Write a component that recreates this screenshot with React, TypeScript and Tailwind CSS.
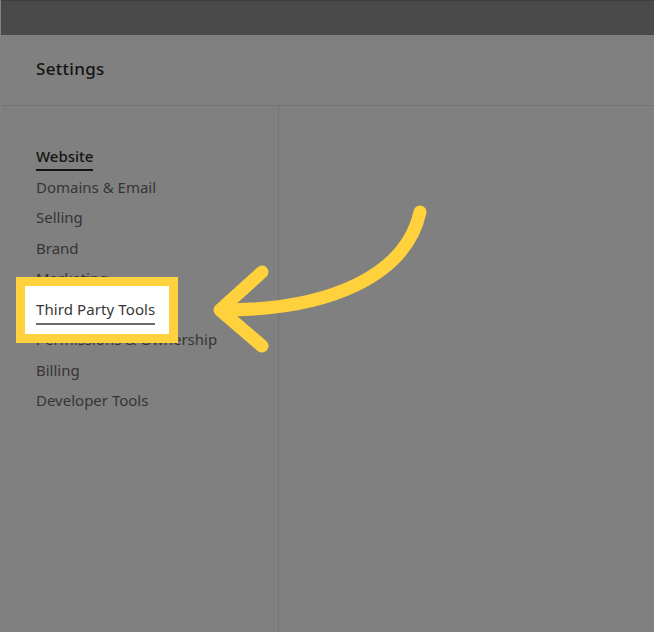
const navItems = [
  "Website",
  "Domains & Email",
  "Selling",
  "Brand",
  "Marketing",
  "Third Party Tools",
  "Permissions & Ownership",
  "Billing",
  "Developer Tools",
];

const App = () => {
  return (
    <div className="relative w-[654px] h-[632px] overflow-hidden bg-[#808080] font-['Noto_Sans',sans-serif] border-l border-[#8c7f80]">
      <div className="h-[35px] bg-[#4a4a4a] border-t border-[#3e3e3e]"></div>
      <div className="h-[71px] flex items-center px-[35px] border-b border-[#747474]">
        <div className="text-[17px] font-medium text-[#141414] tracking-[0.3px] -mt-[2px]">Settings</div>
      </div>
      <div className="flex h-[526px]">
        <div className="w-[278px] border-r border-[#747474] pt-[40px] pl-[35px]">
          <div className="flex flex-col">
            {navItems.map((item, index) => (
              <div key={index} className="h-[30.5px] flex items-start">
                <span
                  className={`text-[15px] leading-[20px] ${
                    index === 0
                      ? "text-[#141414] font-medium border-b-2 border-[#141414] pb-[3px]"
                      : "text-[#353535]"
                  }`}
                >
                  {item}
                </span>
              </div>
            ))}
          </div>
        </div>
        <div className="flex-grow"></div>
      </div>

      {/* highlight box */}
      <div className="absolute left-[15px] top-[277px] w-[162px] h-[66px] border-[9px] border-[#ffd13d] bg-white">
        <div className="pl-[11px] pt-[11px]">
          <span className="text-[15px] leading-[20px] text-[#383838] border-b-2 border-[#6b6b6b] pb-[4px] inline-block tracking-[0.1px]">
            Third Party Tools
          </span>
        </div>
      </div>

      {/* arrow */}
      <svg className="absolute left-0 top-0" width="654" height="632" viewBox="0 0 654 632">
        <g fill="none" stroke="#ffd13d" strokeWidth="13" strokeLinecap="round" strokeLinejoin="round">
          <path d="M419 212 C405 275 330 310 222 310" />
          <path d="M261 272 L219 310 L261 346" />
        </g>
      </svg>
    </div>
  );
};

export default App;
